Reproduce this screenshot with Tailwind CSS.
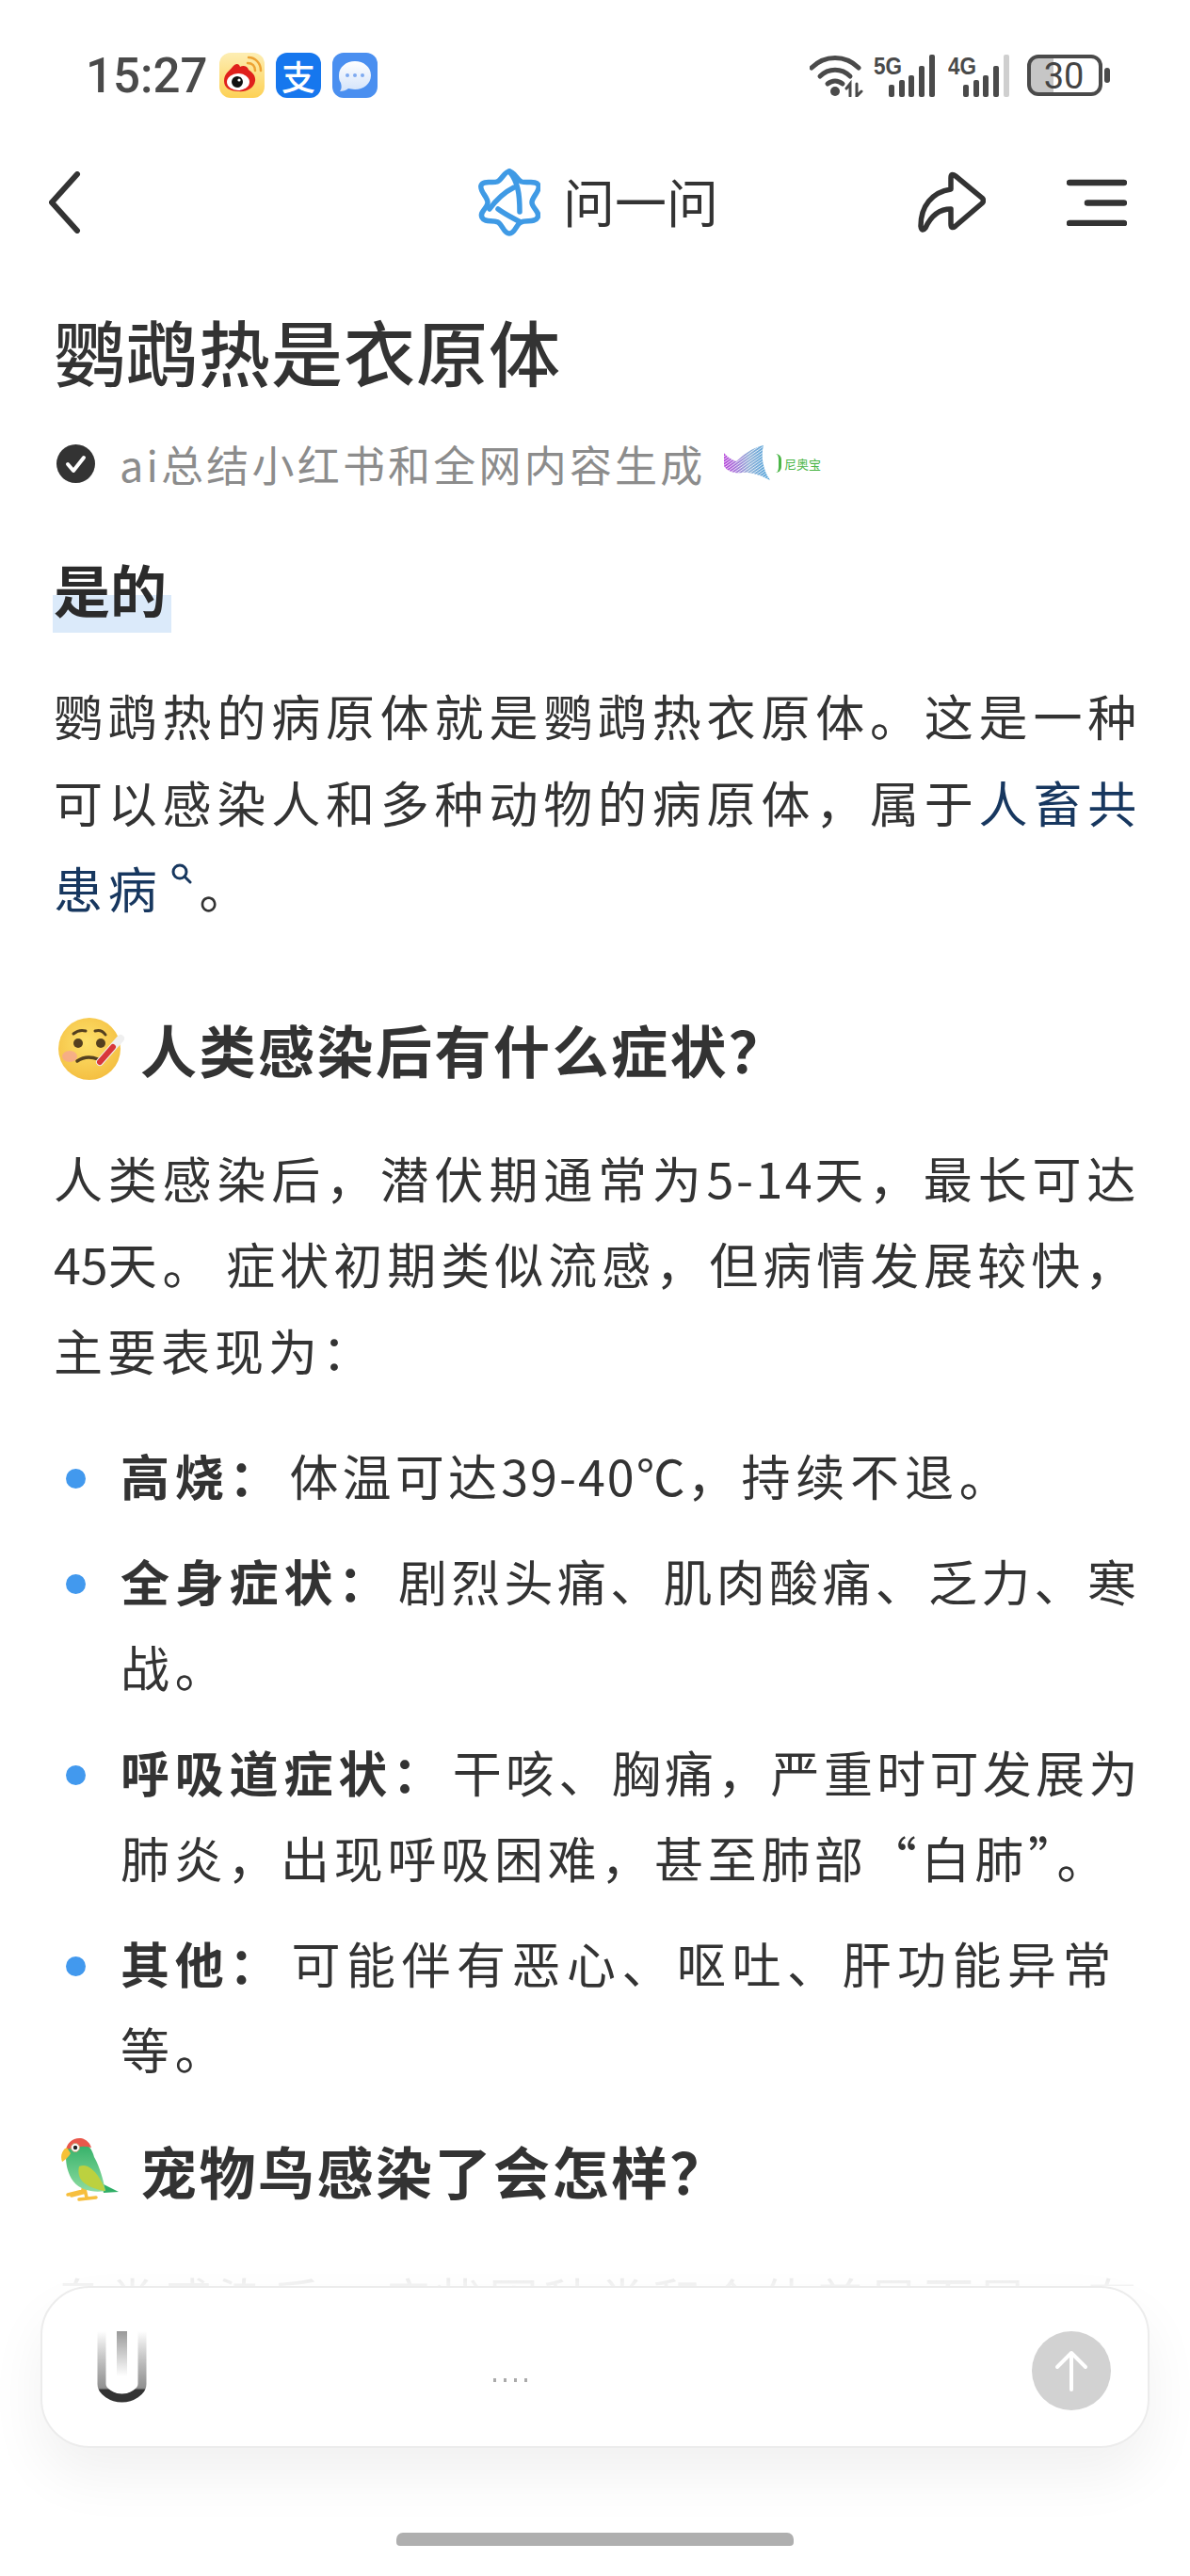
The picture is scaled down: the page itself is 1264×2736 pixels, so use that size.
<!DOCTYPE html>
<html lang="zh-CN">
<head>
  <meta charset="UTF-8">
  <title>问一问</title>
  <meta name="viewport" content="width=device-width, initial-scale=1.0">
  <script src="https://cdn.jsdelivr.net/npm/@tailwindcss/browser@4"></script>
</head>

<body class="relative w-[1264px] h-[2736px] overflow-hidden bg-white text-[#333] font-['Noto_Sans_CJK_SC',sans-serif]">
  <!-- status bar -->
  <div class="h-[160px] flex items-center pl-[91px] text-[#4a4a4a]">
    <span class="font-['Roboto',sans-serif] font-medium text-[51px] leading-none w-[142px]">15:27</span>
    <div class="flex gap-[12px]">
      <svg class="w-[48px] h-[48px]" viewBox="0 0 48 48">
        <defs><linearGradient id="wb" x1="0" y1="0" x2="0" y2="1"><stop offset="0" stop-color="#fdeeb4"/><stop offset="1" stop-color="#fdd155"/></linearGradient></defs>
        <rect width="48" height="48" rx="12" fill="url(#wb)"/>
        <path d="M5 30C5 22 11 19 14 15C17 11 21 11 22 15C25 13 30 14 31 18C33 20 39 23 38 30C37 38 28 42 20 41C11 41 5 37 5 30Z" fill="#e0201c"/>
        <ellipse cx="20" cy="31" rx="12" ry="9" fill="#fff"/>
        <circle cx="19" cy="31" r="6" fill="#111"/>
        <circle cx="21" cy="29" r="1.6" fill="#fff"/>
        <path d="M30 11C35 11 38 14 38 19M31 5C38 5 44 11 44 19" fill="none" stroke="#eda233" stroke-width="2.5" stroke-linecap="round"/>
      </svg>
      <div class="w-[48px] h-[48px] rounded-[12px] bg-[#1677ee] flex items-center justify-center text-white text-[36px] font-medium leading-none">支</div>
      <svg class="w-[48px] h-[48px]" viewBox="0 0 48 48">
        <defs><linearGradient id="msg" x1="0" y1="0" x2="0" y2="1"><stop offset="0" stop-color="#fff"/><stop offset="1" stop-color="#d3e3fa"/></linearGradient></defs>
        <rect width="48" height="48" rx="12" fill="#4a8ff0"/>
        <path d="M24 9C33 9 41 15 41 24C41 33 33 39 24 39C21 39 19 38 17 38C15 40 11 41 8 41C10 38 10 36 9 32C7 29 7 27 7 24C7 15 15 9 24 9Z" fill="url(#msg)"/>
        <circle cx="16" cy="24" r="2" fill="#7eaaf0"/><circle cx="24" cy="24" r="2" fill="#7eaaf0"/><circle cx="32" cy="24" r="2" fill="#7eaaf0"/>
      </svg>
    </div>
    <div class="flex items-center ml-[459px]">
      <svg class="w-[57px] h-[46px]" viewBox="0 0 57 46" fill="none" stroke="#4a4a4a" stroke-linecap="round">
        <path d="M2 15C16 1 38 1 52 15" stroke-width="5"/>
        <path d="M11 24C20 15 34 15 43 24" stroke-width="5"/>
        <path d="M19 32C24 28 30 28 35 32" stroke-width="5"/>
        <circle cx="27" cy="40" r="5" fill="#4a4a4a" stroke="none"/>
        <path d="M43 45V32L39 37M50 32V45L55 40" stroke-width="3"/>
      </svg>
      <svg class="ml-[11px] w-[66px] h-[46px]" viewBox="0 0 66 46">
        <text x="0" y="22" font-family="Liberation Sans" font-weight="700" font-size="26" textLength="30" lengthAdjust="spacingAndGlyphs" fill="#4a4a4a">5G</text>
        <g fill="#4a4a4a"><rect x="16" y="33" width="6" height="13" rx="2"/><rect x="27" y="28" width="6" height="18" rx="2"/><rect x="37" y="23" width="6" height="23" rx="2"/><rect x="48" y="13" width="6" height="33" rx="2"/><rect x="59" y="1" width="6" height="45" rx="2"/></g>
      </svg>
      <svg class="ml-[13px] w-[66px] h-[46px]" viewBox="0 0 66 46">
        <text x="0" y="22" font-family="Liberation Sans" font-weight="700" font-size="26" textLength="30" lengthAdjust="spacingAndGlyphs" fill="#4a4a4a">4G</text>
        <g fill="#4a4a4a"><rect x="16" y="33" width="6" height="13" rx="2"/><rect x="27" y="28" width="6" height="18" rx="2"/><rect x="37" y="23" width="6" height="23" rx="2"/><rect x="48" y="13" width="6" height="33" rx="2"/></g>
        <rect x="59" y="1" width="6" height="45" rx="2" fill="#cfcfcf"/>
      </svg>
      <svg class="ml-[18px] w-[89px] h-[46px]" viewBox="0 0 89 46">
        <path d="M12 3H28V43H12Q2 43 2 33V13Q2 3 12 3Z" fill="#c6c6c6"/>
        <rect x="2" y="3" width="76" height="40" rx="10" fill="none" stroke="#4a4a4a" stroke-width="4"/>
        <rect x="82" y="15" width="6" height="16" rx="3" fill="#4a4a4a"/>
        <text x="39" y="37" text-anchor="middle" font-family="Roboto" font-size="38" fill="#444">30</text>
      </svg>
    </div>
  </div>

  <!-- nav -->
  <div class="h-[110px] flex items-center pl-[52px]">
    <svg class="w-[34px] h-[66px]" viewBox="0 0 34 66" fill="none" stroke="#333" stroke-width="6" stroke-linecap="round" stroke-linejoin="round"><path d="M30 3L3 33L30 63"/></svg>
    <svg class="ml-[422px] w-[66px] h-[72px]" viewBox="0 0 66 72" fill="none" stroke="#3f9ae5" stroke-width="5.5" stroke-linecap="round" stroke-linejoin="round">
      <path d="M33 3C38 3 41 12 46 14C52 16 62 12 64 18C66 24 57 30 57 36C57 42 66 46 63 52C60 58 51 54 45 57C40 60 39 69 33 69C27 69 26 60 21 57C15 54 7 58 4 52C1 46 10 42 10 36C10 30 1 24 3 18C5 12 15 16 20 14C25 12 28 3 33 3Z"/>
      <path d="M33 3C42 14 44 26 44 46M12 43C20 32 30 24 38 20M21 43C29 49 36 52 45 57"/>
    </svg>
    <span class="ml-[24px] pb-[6px] w-[165px] text-[55px] leading-none whitespace-nowrap">问一问</span>
    <svg class="ml-[212px] w-[72px] h-[66px]" viewBox="0 0 72 66" fill="none" stroke="#333" stroke-width="5.5" stroke-linecap="round" stroke-linejoin="round"><path d="M35 19V7Q35 1 40 5L68 28Q71 31 68 34L40 58Q35 62 35 56V40C23 40 14 47 8 60Q4 65 3 58C3 37 15 22 35 19Z"/></svg>
    <svg class="ml-[86px] w-[64px] h-[50px]" viewBox="0 0 64 50" stroke="#333" stroke-width="6.5" stroke-linecap="round"><path d="M3 4H61M22 25.500H61M3 47H61"/></svg>
  </div>

  <main class="pl-[57px] w-[1220px]">
    <h1 class="mt-[52px] text-[76px] leading-[100px] tracking-[1px] font-medium text-[#333]">鹦鹉热是衣原体</h1>

    <div class="mt-[45px] h-[50px] flex items-center">
      <svg class="w-[41px] h-[41px] ml-[3px]" viewBox="0 0 41 41"><circle cx="20.500" cy="20.500" r="20.500" fill="#333"/><path d="M12 21L18 28L29 14" fill="none" stroke="#fff" stroke-width="4" stroke-linecap="round" stroke-linejoin="round"/></svg>
      <span class="ml-[26px] text-[45px] leading-none text-[#8c8c8c] w-[641px] whitespace-nowrap tracking-[3.200px]">ai总结小红书和全网内容生成</span>
      <svg class="w-[50px] h-[38px]" viewBox="0 0 50 38">
        <defs>
          <linearGradient id="fan" x1="0" y1="0" x2="1" y2="0"><stop offset="0" stop-color="#b43fd9"/><stop offset=".55" stop-color="#8fb0d6"/><stop offset="1" stop-color="#3f9bd8"/></linearGradient>
          <pattern id="fanLines" width="2.500" height="2.500" patternUnits="userSpaceOnUse" patternTransform="rotate(55)"><rect width="0.900" height="2.500" fill="#fff" opacity=".8"/></pattern>
        </defs>
        <path d="M1 8C4 12 8 15 14 17C22 10 30 3 43 0C40 10 42 26 50 37C40 32 30 28 20 29C12 30 5 28 1 22Z" fill="url(#fan)"/>
        <path d="M1 8C4 12 8 15 14 17C22 10 30 3 43 0C40 10 42 26 50 37C40 32 30 28 20 29C12 30 5 28 1 22Z" fill="url(#fanLines)"/>
      </svg>
      <span class="ml-[6px] flex items-center text-[13px] leading-none text-[#4cb648] whitespace-nowrap w-[49px] overflow-hidden"><span class="mr-[3px] w-[6px] h-[20px] rounded-r-full border-r-[3px] border-[#4cb648]"></span>尼奥宝</span>
    </div>

    <h2 class="mt-[71px] text-[60px] font-bold text-[#2b2b2b]"><span class="block w-[126px] -ml-[1px] pl-[1px] h-[84px] leading-[74px] bg-[linear-gradient(transparent_44px,#dbeafa_44px)]">是的</span></h2>

    <p class="mt-[42px] text-[52px] leading-[91.500px] tracking-[5.800px]">鹦鹉热的病原体就是鹦鹉热衣原体。这是一种可以感染人和多种动物的病原体，属于<span class="text-[#17375f]">人畜共患病</span><svg class="inline-block w-[23px] h-[23px] ml-[8px] align-[26px]" viewBox="0 0 23 23" fill="none" stroke="#17375f" stroke-width="3" stroke-linecap="round"><circle cx="10" cy="10" r="7"/><path d="M15 15L21 21"/></svg><span class="ml-[8px]">。</span></p>

    <h2 class="mt-[85px] h-[80px] flex items-center text-[60px] leading-[80px] tracking-[2.500px] font-bold">
      <svg class="w-[72px] h-[68px] ml-[5px] mr-[15px] shrink-0" viewBox="0 0 72 68">
        <defs><radialGradient id="face" cx=".45" cy=".4" r=".65"><stop offset="0" stop-color="#fde16b"/><stop offset="1" stop-color="#f4bd3f"/></radialGradient></defs>
        <circle cx="33" cy="34" r="33" fill="url(#face)"/>
        <ellipse cx="12" cy="42" rx="8" ry="6" fill="#f5a19a" opacity=".7"/>
        <path d="M16 18Q22 13 29 15M39 15Q46 13 50 19" fill="none" stroke="#54401f" stroke-width="3" stroke-linecap="round"/>
        <circle cx="21" cy="28" r="5" fill="#54401f"/><circle cx="45" cy="28" r="5" fill="#54401f"/>
        <path d="M20 47Q30 40 42 45" fill="none" stroke="#54401f" stroke-width="3.500" stroke-linecap="round"/>
        <path d="M44 48L66 23" stroke="#efefef" stroke-width="8" stroke-linecap="round"/>
        <path d="M44 48L58 32" stroke="#d8363a" stroke-width="6" stroke-linecap="round"/>
      </svg>
      人类感染后有什么症状？
    </h2>

    <p class="mt-[51px] text-[52px] leading-[91.500px] tracking-[5.800px]">人类感染后，潜伏期通常为<span class="tracking-[2.500px]">5-14</span>天，最长可达<span class="tracking-[0px]">45</span>天。<span class="ml-[10px] tracking-[5px]">症状初期类似流感，但病情发展较快，主要表现为：</span></p>

    <ul class="mt-[42px] flex flex-col gap-[20px] text-[52px] leading-[91.500px] tracking-[5.800px] whitespace-nowrap">
      <li class="flex">
        <span class="w-[71px] h-[91.500px] pt-[8px] flex items-center shrink-0"><span class="w-[21px] h-[21px] ml-[13px] rounded-full bg-[#4299ee]"></span></span>
        <div><strong class="font-bold">高烧：</strong><span class="ml-[6px]"><span class="tracking-[4.200px]">体温可达</span><span class="tracking-[2px]">39-40℃</span>，持续不退。</span></div>
      </li>
      <li class="flex">
        <span class="w-[71px] h-[91.500px] pt-[8px] flex items-center shrink-0"><span class="w-[21px] h-[21px] ml-[13px] rounded-full bg-[#4299ee]"></span></span>
        <div><strong class="font-bold">全身症状：</strong><span class="ml-[6px] tracking-[4.300px]">剧烈头痛、肌肉酸痛、乏力、寒</span><br>战。</div>
      </li>
      <li class="flex">
        <span class="w-[71px] h-[91.500px] pt-[8px] flex items-center shrink-0"><span class="w-[21px] h-[21px] ml-[13px] rounded-full bg-[#4299ee]"></span></span>
        <div><strong class="font-bold">呼吸道症状：</strong><span class="ml-[6px] tracking-[4.300px]">干咳、胸痛，严重时可发展为</span><br><span class="tracking-[4.700px]">肺炎，出现呼吸困难，甚至肺部“白肺”。</span></div>
      </li>
      <li class="flex">
        <span class="w-[71px] h-[91.500px] pt-[8px] flex items-center shrink-0"><span class="w-[21px] h-[21px] ml-[13px] rounded-full bg-[#4299ee]"></span></span>
        <div><strong class="font-bold">其他：</strong><span class="ml-[8px] tracking-[6.500px]">可能伴有恶心、呕吐、肝功能异常</span><br>等。</div>
      </li>
    </ul>

    <h2 class="mt-[43px] h-[80px] flex items-center text-[60px] leading-[80px] tracking-[2.500px] font-bold">
      <svg class="w-[66px] h-[72px] ml-[7px] mr-[19px] shrink-0" viewBox="0 0 66 72">
        <defs><linearGradient id="bird" x1="0" y1="0" x2="0" y2="1"><stop offset="0" stop-color="#2fae66"/><stop offset="1" stop-color="#8ddca0"/></linearGradient></defs>
        <path d="M8 62L24 58M24 56V60L12 63M26 56L28 65M20 67L38 65" fill="none" stroke="#f7bf3d" stroke-width="3.500" stroke-linecap="round"/>
        <path d="M44 50L62 59L46 60Z" fill="#2fae66"/>
        <path d="M6 22C6 10 14 5 22 6C30 8 34 14 36 22C42 32 46 48 48 58C36 60 22 58 14 48C8 40 6 30 6 22Z" fill="url(#bird)"/>
        <path d="M6 16C6 7 14 1 22 2C28 3 32 8 33 12C26 10 20 10 14 14C10 12 8 13 6 16Z" fill="#e9584b"/>
        <path d="M20 32C28 28 36 36 40 42C44 48 47 54 48 58C38 57 26 52 22 46C19 41 19 36 20 32Z" fill="#bcd13f"/>
        <path d="M7 12C1 15 0 22 2 27C4 26 9 22 11 18Z" fill="#f6c136"/>
        <circle cx="16" cy="12" r="4.500" fill="#fff" stroke="#c9a77a"/><circle cx="16" cy="12" r="2.200" fill="#222"/>
      </svg>
      宠物鸟感染了会怎样？
    </h2>

    <p class="mt-[51px] text-[52px] leading-[91.500px] tracking-[5.800px]">鸟类感染后，症状因种类和个体差异而异，有</p>
  </main>

  <div class="absolute left-0 right-0 bottom-0 flex flex-col">
    <div class="h-[48px] bg-gradient-to-b from-white/70 to-white/95"></div>
    <div class="bg-white pb-[32px] flex flex-col">
      <div class="mx-[43px] h-[172px] rounded-[52px] border-2 border-[#ececec] bg-white shadow-[0_30px_60px_rgba(0,0,0,0.06)] flex items-start pt-[46px] pl-[58px] pr-[39px]">
        <svg class="w-[53px] h-[76px] shrink-0" viewBox="0 0 53 76">
          <defs><linearGradient id="cur" x1="0" y1="0" x2="0" y2="1"><stop offset="0" stop-color="#333" stop-opacity="0"/><stop offset=".85" stop-color="#555" stop-opacity=".65"/><stop offset=".88" stop-color="#333"/><stop offset="1" stop-color="#333"/></linearGradient><linearGradient id="stem" x1="0" y1="0" x2="0" y2="1"><stop offset="0" stop-color="#999"/><stop offset=".8" stop-color="#fff"/></linearGradient></defs>
          <path d="M5 0V56C5 64 16 71 26.500 71C37 71 48 64 48 56V0" fill="none" stroke="url(#cur)" stroke-width="9"/>
          <rect x="21" y="0" width="11" height="60" fill="url(#stem)"/>
        </svg>
        <div class="ml-[368px] mt-[50px] flex gap-[8px]">
          <span class="w-[3px] h-[4px] bg-[#aaa]"></span><span class="w-[3px] h-[4px] bg-[#aaa]"></span><span class="w-[3px] h-[4px] bg-[#aaa]"></span><span class="w-[3px] h-[4px] bg-[#aaa]"></span>
        </div>
        <div class="ml-auto w-[84px] h-[84px] rounded-full bg-[#d2d2d2] flex items-center justify-center">
          <svg class="w-[36px] h-[44px]" viewBox="0 0 36 44" fill="none" stroke="#fff" stroke-width="4" stroke-linecap="round" stroke-linejoin="round"><path d="M18 42V3M3 18L18 3L33 18"/></svg>
        </div>
      </div>
      <div class="mt-[90px] mx-auto w-[422px] h-[14px] rounded-t-[7px] rounded-b-[4px] bg-[#afafaf]"></div>
    </div>
  </div>
</body>
</html>
